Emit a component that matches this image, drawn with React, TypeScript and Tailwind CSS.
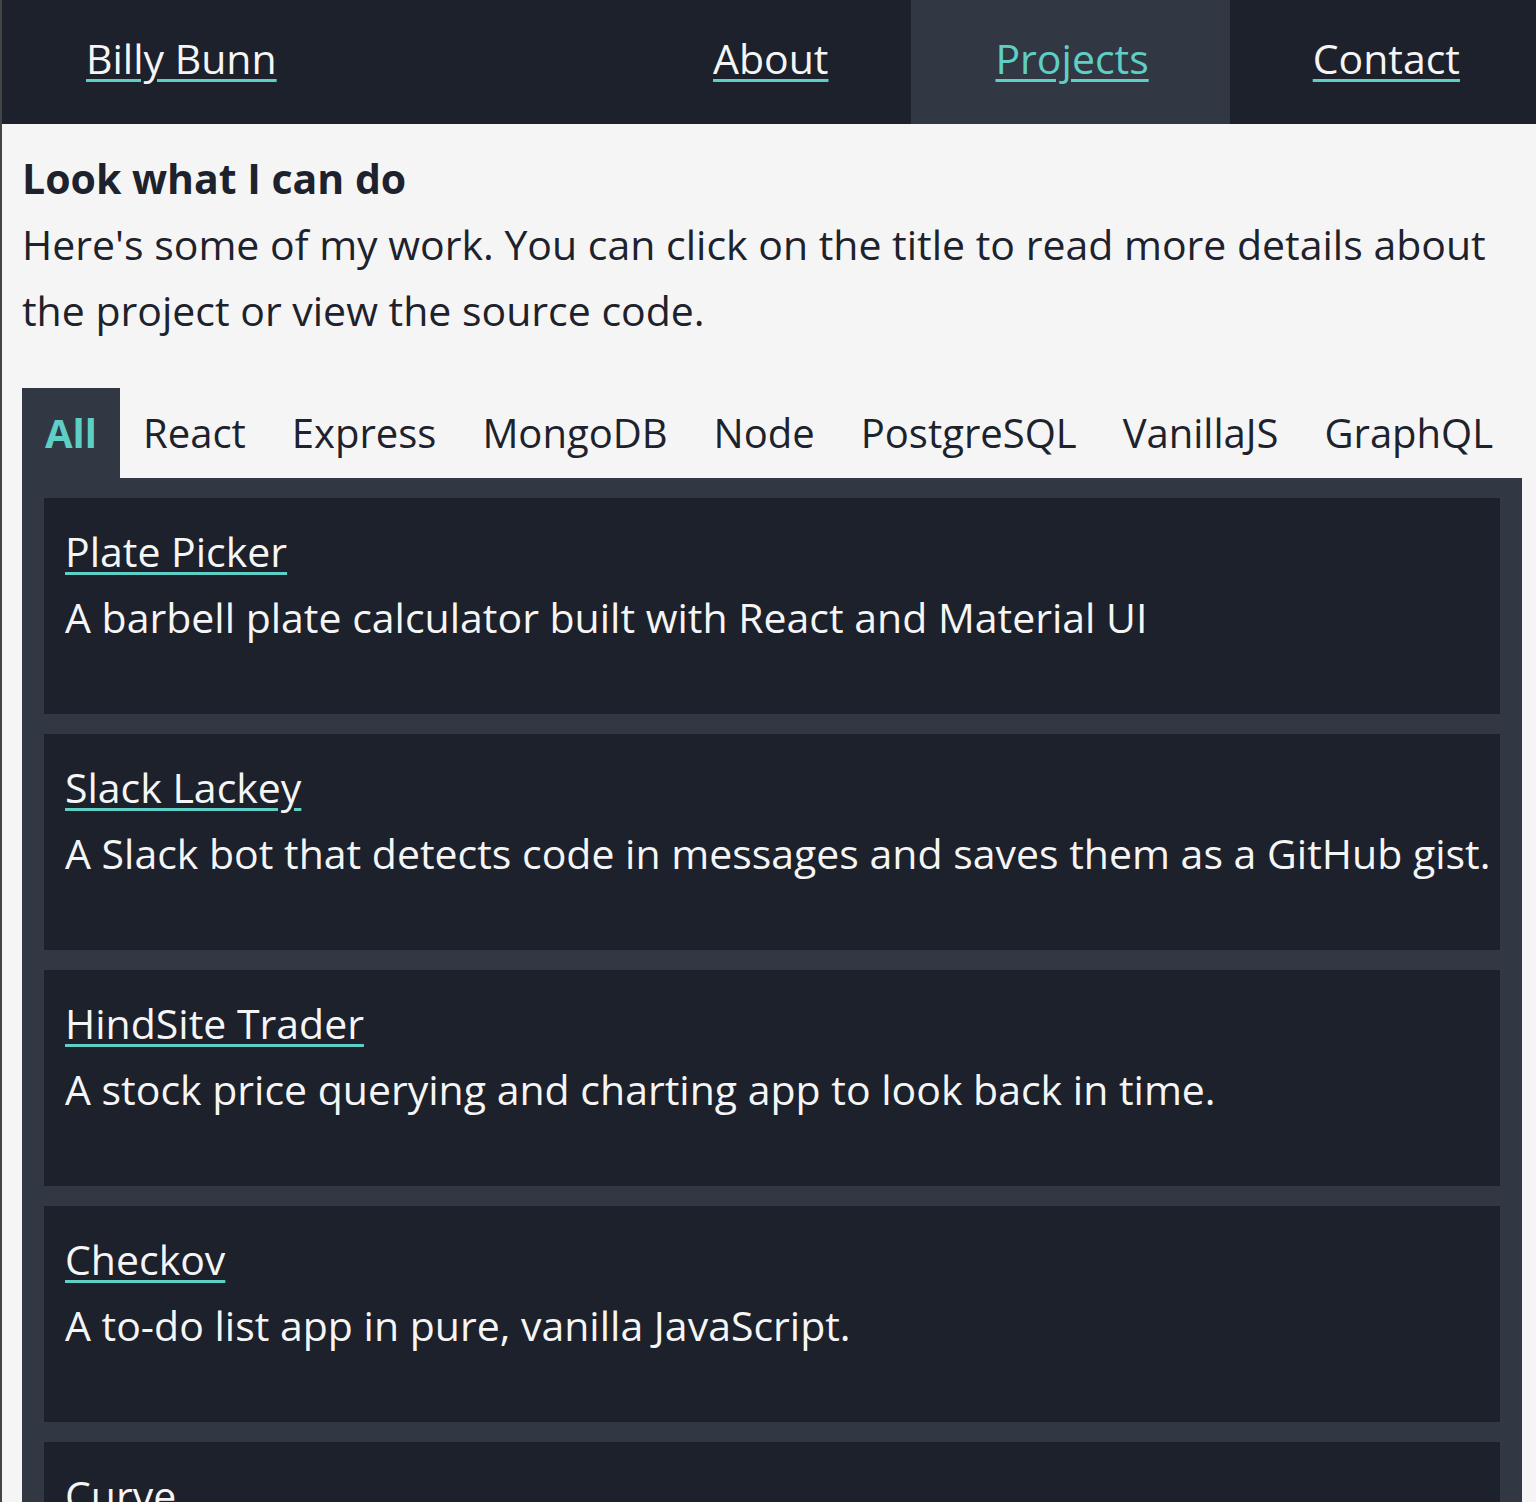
import React from 'react'

const tabs = ['All', 'React', 'Express', 'MongoDB', 'Node', 'PostgreSQL', 'VanillaJS', 'GraphQL']

const projects = [
  { title: 'Plate Picker', desc: 'A barbell plate calculator built with React and Material UI' },
  { title: 'Slack Lackey', desc: 'A Slack bot that detects code in messages and saves them as a GitHub gist.' },
  { title: 'HindSite Trader', desc: 'A stock price querying and charting app to look back in time.' },
  { title: 'Checkov', desc: 'A to-do list app in pure, vanilla JavaScript.' },
  { title: 'Curve', desc: 'A tool for curving grades.' },
]

const link =
  'underline decoration-[#5fcfc5] decoration-[3px] underline-offset-[5px]'

export default function App() {
  return (
    <div
      className="h-[1502px] bg-[#f5f5f5] border-l-2 border-[#444] text-[#1d222c] overflow-hidden"
      style={{ fontFamily: '"Open Sans", "Noto Sans", sans-serif' }}
    >
      <header className="flex h-[124px] bg-[#1c212b] text-[41px] text-[#f5f5f5]">
        <a href="#" className="flex items-center pl-[84px] pr-[84px] pb-[7px]">
          <span className={link}>Billy Bunn</span>
        </a>
        <nav className="ml-auto flex">
          <a href="#" className="flex items-center px-[83px] pb-[7px]">
            <span className={link}>About</span>
          </a>
          <a href="#" className="flex items-center pl-[84px] pr-[81px] pb-[7px] bg-[#313843] text-[#5fcfc5]">
            <span className={link}>Projects</span>
          </a>
          <a href="#" className="flex items-center pl-[83px] pr-[76px] pb-[7px]">
            <span className={link}>Contact</span>
          </a>
        </nav>
      </header>

      <main className="pl-[20px] pr-[14px] pt-[21px] text-[41px] leading-[66px]">
        <h1 className="font-bold">Look what I can do</h1>
        <p className="pr-[24px]">
          Here's some of my work. You can click on the title to read more details about the project or
          view the source code.
        </p>

        <div className="mt-[45px] flex h-[90px] text-[40px]">
          {tabs.map((t, i) => (
            <button
              key={t}
              className={
                i === 0
                  ? 'px-[23px] bg-[#313843] text-[#5fcfc5] font-bold'
                  : 'px-[23px] text-[#1d222c]'
              }
            >
              {t}
            </button>
          ))}
        </div>

        <div className="bg-[#313843] px-[22px] pt-[20px] pb-[20px] flex flex-col gap-[20px]">
          {projects.map((p) => (
            <div key={p.title} className="bg-[#1c212b] text-[#f5f5f5] px-[21px] pt-[20px] pb-[64px]">
              <a href="#" className={link}>
                {p.title}
              </a>
              <p className="whitespace-nowrap">{p.desc}</p>
            </div>
          ))}
        </div>
      </main>
    </div>
  )
}
